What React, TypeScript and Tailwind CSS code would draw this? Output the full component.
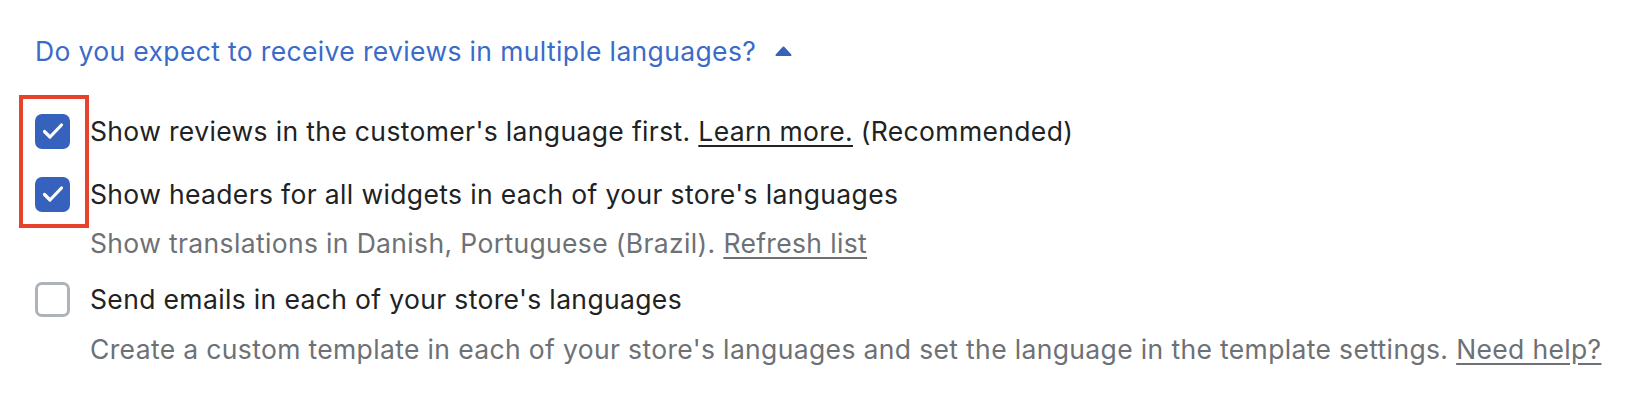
import { useState } from "react";

type Option = {
  id: string;
  checked: boolean;
};

function CheckBox({ checked, onToggle }: { checked: boolean; onToggle: () => void }) {
  return (
    <button
      type="button"
      onClick={onToggle}
      className={`flex h-[35px] w-[35px] shrink-0 items-center justify-center rounded-[7px] ${
        checked ? "bg-[#3662bd]" : "border-[3px] border-[#aeb3ba] bg-white"
      }`}
    >
      {checked ? (
        <svg width="22" height="18" viewBox="0 0 22 18" fill="none">
          <path d="M2.5 9.5l5.5 5.5L19.5 3" stroke="white" strokeWidth="3.2" strokeLinecap="round" strokeLinejoin="round" />
        </svg>
      ) : null}
    </button>
  );
}

export default function App() {
  const [open, setOpen] = useState(true);
  const [options, setOptions] = useState<Option[]>([
    { id: "reviews", checked: true },
    { id: "headers", checked: true },
    { id: "emails", checked: false }
  ]);

  function toggle(id: string) {
    setOptions((prev) => prev.map((o) => (o.id === id ? { ...o, checked: !o.checked } : o)));
  }

  return (
    <main
      className="min-h-[400px] w-full bg-white pl-[35px] pt-[33px] text-[26.5px] leading-[36px] tracking-[0.35px] text-[#202223]"
      style={{ fontFamily: "Inter, 'Noto Sans', sans-serif" }}
    >
      <button
        type="button"
        onClick={() => setOpen(!open)}
        className="flex items-center gap-[19px] text-[#3a6bc9]"
      >
        <span>Do you expect to receive reviews in multiple languages?</span>
        <svg width="17" height="10" viewBox="0 0 17 10" className={open ? "" : "rotate-180"}>
          <path d="M7.3 1.2a1.6 1.6 0 0 1 2.4 0l6.6 7.2c.5.6.1 1.6-.7 1.6H1.4c-.8 0-1.2-1-.7-1.6z" fill="#3662bd" />
        </svg>
      </button>

      {open ? (
        <div className="relative mt-[44px]">
          {/* highlight around the checked boxes */}
          <div className="pointer-events-none absolute left-[-16px] top-[-18px] h-[133px] w-[70px] border-[4px] border-[#e5432b]" />

          <div className="flex items-center gap-[20px]">
            <CheckBox checked={options[0].checked} onToggle={() => toggle("reviews")} />
            <p>
              Show reviews in the customer's language first. <span className="underline underline-offset-[4px]">Learn more.</span> (Recommended)
            </p>
          </div>

          <div className="mt-[27px]">
            <div className="flex items-center gap-[20px]">
              <CheckBox checked={options[1].checked} onToggle={() => toggle("headers")} />
              <p>Show headers for all widgets in each of your store's languages</p>
            </div>
            <p className="ml-[55px] mt-[13px] text-[#6d7175]">
              Show translations in Danish, Portuguese (Brazil). <span className="underline underline-offset-[4px]">Refresh list</span>
            </p>
          </div>

          <div className="mt-[20px]">
            <div className="flex items-center gap-[20px]">
              <CheckBox checked={options[2].checked} onToggle={() => toggle("emails")} />
              <p>Send emails in each of your store's languages</p>
            </div>
            <p className="ml-[55px] mt-[14px] text-[#6d7175]">
              Create a custom template in each of your store's languages and set the language in the template settings.{" "}
              <span className="underline underline-offset-[4px]">Need help?</span>
            </p>
          </div>
        </div>
      ) : null}
    </main>
  );
}
